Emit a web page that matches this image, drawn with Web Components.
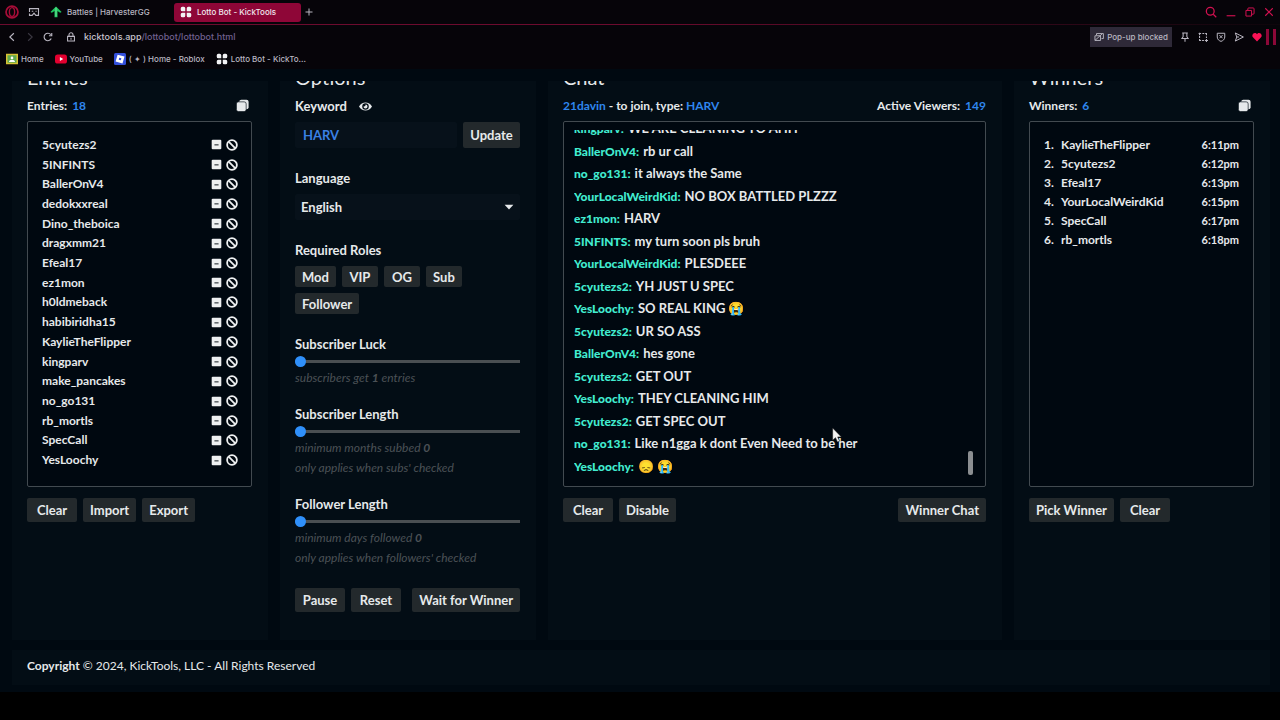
<!DOCTYPE html>
<html lang="en">
<head>
<meta charset="utf-8">
<title>Lotto Bot - KickTools</title>
<style>
  html, body { margin: 0; height: 100%; background: #000; }
  body {
    --text: #e6e9eb;
    --blue: #2f86ee;
    --mint: #42ecd0;
    --panel: #030d15;
    --well: #000810;
    --line: #424a50;
    --button: #23292c;
    font-family: Lato, "Liberation Sans", sans-serif;
    font-size: 13px;
    font-weight: 700;
    line-height: 20px;
    color: var(--text);
    overflow: hidden;
  }
</style>
</head>
<body>
<lotto-app></lotto-app>

<script>
const template = (html) => {
  const el = document.createElement("template");
  el.innerHTML = html;
  return el;
};

class BaseElement extends HTMLElement {
  constructor() {
    super();
    this.attachShadow({ mode: "open" });
    this.shadowRoot.appendChild(this.constructor.template.content.cloneNode(true));
  }
}

/* ---------- icons ---------- */

const icons = {
  opera: `<circle cx="8" cy="8" r="6.800" fill="none" stroke="#a80d38" stroke-width="2"/><ellipse cx="8" cy="8" rx="3" ry="5" fill="none" stroke="#a80d38" stroke-width="1.600"/>`,
  workspace: `<path d="M2 8V3.500h12V12.500h-3.500L8 9.500l-2.500 3H2V10M5 7h2M10 7h1.500" fill="none" stroke="currentColor" stroke-width="1.500"/>`,
  harvester: `<path d="M8 0.500L15.500 8l-2 1L10 6.500V15H6V6.500L2.500 9l-2-1Z" fill="#1fc560"/><path d="M8 2v12" stroke="#8af0b0"/>`,
  clover: `<path d="M1 3a2 2 0 0 1 2-2h2a2 2 0 0 1 2 2v4H3a2 2 0 0 1-2-2ZM9 3a2 2 0 0 1 2-2h2a2 2 0 0 1 2 2v2a2 2 0 0 1-2 2H9ZM1 11a2 2 0 0 1 2-2h4v4a2 2 0 0 1-2 2H3a2 2 0 0 1-2-2ZM9 9h4a2 2 0 0 1 2 2v2a2 2 0 0 1-2 2h-2a2 2 0 0 1-2-2Z" fill="#f2f2f4"/>`,
  plus: `<path d="M8 1v14M1 8h14" stroke="currentColor" stroke-width="2"/>`,
  back: `<path d="M11 2L4.500 8L11 14" fill="none" stroke="currentColor" stroke-width="1.800"/>`,
  forward: `<path d="M5 2l6.500 6L5 14" fill="none" stroke="currentColor" stroke-width="1.800"/>`,
  reload: `<path d="M13.200 10.500A6 6 0 1 1 12.500 4.200M14 1.500V6H9.500" fill="none" stroke="currentColor" stroke-width="1.800"/>`,
  lock: `<path d="M2.500 7h11v7.500h-11ZM4.800 7V4.500a3.200 3.200 0 0 1 6.400 0V7M8 9v3.500" fill="none" stroke="currentColor" stroke-width="1.700"/>`,
  classroom: `<path d="M0 1h16v14H0Z" fill="#d8c234"/><path d="M2 3h12v10H2Z" fill="#5ea94e"/><circle cx="8" cy="6.500" r="1.800" fill="#fff"/><path d="M4 12c0-4 8-4 8 0Z" fill="#fff"/>`,
  youtube: `<rect y="2" width="16" height="12" rx="3.500" fill="#e3002f"/><path d="M6.500 5.300L11 8l-4.500 2.700Z" fill="#fff"/>`,
  roblox: `<rect width="16" height="16" rx="2" fill="#3350dc"/><path fill="#fff" fill-rule="evenodd" d="M4.800 2.200L14 4.800L11.300 13.900L2.100 11.400ZM7 6.300L6.300 9L9.100 9.700L9.800 7Z"/>`,
  search: `<circle cx="7" cy="7" r="5.200" fill="none" stroke="currentColor" stroke-width="1.700"/><path d="M11 11l4 4" stroke="currentColor" stroke-width="1.700"/>`,
  minimize: `<path d="M1 14h14" stroke="currentColor" stroke-width="1.800"/>`,
  restore: `<path d="M1.500 5.500h9v9h-9ZM4.500 5V3a1.500 1.500 0 0 1 1.500-1.500h7A1.500 1.500 0 0 1 14.500 3v7a1.500 1.500 0 0 1-1.500 1.500h-2" fill="none" stroke="currentColor" stroke-width="1.600"/>`,
  close: `<path d="M2 2l12 12M14 2L2 14" stroke="currentColor" stroke-width="1.700"/>`,
  popup: `<path d="M4 5V2.500h11v8h-3M1.500 6h9v7.500h-9ZM1.500 13.500L13 3" fill="none" stroke="currentColor" stroke-width="1.500"/>`,
  pin: `<path d="M3.500 1.500h9M5 1.500v6L3 10.500h10L11 7.500v-6M8 10.500v5" fill="none" stroke="currentColor" stroke-width="1.700"/>`,
  snapshot: `<path d="M2.500 1v4M1 2.500h4M7 2.500h3M11.500 2.500h2V5M13.500 7v2.500M13.500 11v5M11 13.500h5M9.500 13.500H6.500M5 13.500H2.500V11M2.500 9.500V6.500" fill="none" stroke="currentColor" stroke-width="1.700"/>`,
  shield: `<path d="M2 2h12v6c0 4-3 6-6 7c-3-1-6-3-6-7ZM5.500 5l5 5M10.500 5l-5 5" fill="none" stroke="currentColor" stroke-width="1.600"/>`,
  send: `<path d="M2 1.500L15 8L2 14.500L4.500 8ZM4.500 8H8" fill="none" stroke="currentColor" stroke-width="1.600"/>`,
  heart: `<path d="M8 15L1.500 8.500C-1 5.500 1.500 1.500 4.800 1.500C6.500 1.500 7.500 2.500 8 3.500C8.500 2.500 9.500 1.500 11.200 1.500C14.500 1.500 17 5.500 14.500 8.500Z" fill="#fa1256"/>`,
  copy: `<rect x="4" y="1" width="11.500" height="11.500" rx="2.500" fill="currentColor"/><rect x="0.500" y="3.500" width="12" height="12" rx="2.500" fill="currentColor" stroke="#030d15" stroke-width="0.800"/>`,
  eye: `<path d="M0 8C3.500 1.500 12.500 1.500 16 8C12.500 14.500 3.500 14.500 0 8Z" fill="currentColor"/><circle cx="8" cy="8" r="4" fill="#030d15"/><path d="M8 5.500A2.500 2.500 0 1 1 5.500 8A2 2 0 0 0 8 5.500Z" fill="currentColor"/>`,
  minus: `<rect x="1" y="1" width="14" height="14" rx="1.500" fill="currentColor"/><path d="M5 8.500h6" stroke="#3c4348" stroke-width="1.800"/>`,
  ban: `<circle cx="8" cy="8" r="6.500" fill="none" stroke="currentColor" stroke-width="2.400"/><path d="M3.500 3.500l9 9" stroke="currentColor" stroke-width="2.400"/>`,
  caret: `<path d="M1 4.500h14L8 12Z" fill="currentColor"/>`,
  pointer: `<path d="M3 0v14l3.300-3L8.500 16l2.500-1L8.800 10.200H13Z" fill="#f4f4f4" stroke="#111" stroke-width="0.600"/>`
};

class LottoIcon extends HTMLElement {
  connectedCallback() {
    const root = this.shadowRoot || this.attachShadow({ mode: "open" });
    root.innerHTML = /* html */ `
      <style>
        :host { display: block; flex: none; width: 12px; height: 12px; }
        svg { display: block; width: 100%; height: 100%; }
      </style>
      <svg viewBox="0 0 16 16" aria-hidden="true">${icons[this.getAttribute("name")]}</svg>`;
  }
}
customElements.define("lotto-icon", LottoIcon);

/* ---------- browser bars ---------- */

class BrowserBar extends BaseElement {
  static template = template(/* html */ `
    <style>
      :host {
        display: block;
        flex: none;
        background: #060409;
        color: #b9b6c1;
        font: 500 8px/12px Inter, "Liberation Sans", sans-serif;
      }
      .row { display: flex; align-items: center; }
      .tabs {
        height: 24px;
        padding: 0 6px 0 5px;
        border-bottom: 1px solid;
        border-image: linear-gradient(90deg, #6c0b2e 50%, #0d050b) 1;
      }
      .address { height: 24px; padding: 0 4px 0 7px; }
      .bookmarks { height: 20px; padding: 0 6px; gap: 11px; }
      button {
        display: flex;
        align-items: center;
        gap: 5px;
        padding: 0;
        border: 0;
        background: none;
        color: inherit;
        font: inherit;
      }
      a { display: flex; align-items: center; gap: 3px; color: inherit; text-decoration: none; white-space: nowrap; }
      .space { flex: 1; }
      .small { width: 10px; height: 10px; }
      .opera { width: 14px; height: 14px; }
      .start { gap: 9px; }
      .tab { width: 118px; margin-left: 10px; white-space: nowrap; }
      .active {
        width: 127px;
        height: 19px;
        margin-left: 6px;
        padding-left: 6px;
        border-radius: 3px;
        background: #8e0637;
        color: #f0e8ee;
      }
      .add { width: 16px; height: 16px; justify-content: center; }
      .add lotto-icon { width: 8px; height: 8px; }
      .window { gap: 9px; color: #d21150; }
      .window button, .tools button { flex: none; }
      .url { margin-left: 8px; font-size: 9px; color: #c8c5cf; }
      .url span { color: #71608f; }
      .nav { gap: 8px; }
      .nav .lock { margin-left: 5px; }
      .dim { color: #3b3842; }
      .popup {
        height: 20px;
        gap: 3px;
        padding: 0 4px;
        background: #2e2938;
        white-space: nowrap;
      }
      .tools { gap: 8px; }
      .stripes { width: 4px; height: 16px; margin-left: 4px; border: solid #8c0838; border-width: 0 3px; }
    </style>
    <div class="row tabs">
      <div class="row start">
        <button aria-label="Menu"><lotto-icon class="opera" name="opera"></lotto-icon></button>
        <button aria-label="Workspaces"><lotto-icon name="workspace"></lotto-icon></button>
      </div>
      <button class="tab"><lotto-icon name="harvester"></lotto-icon>Battles | HarvesterGG</button>
      <button class="tab active"><lotto-icon name="clover"></lotto-icon>Lotto Bot - KickTools</button>
      <button class="add" aria-label="New tab"><lotto-icon name="plus"></lotto-icon></button>
      <span class="space"></span>
      <div class="row window">
        <button aria-label="Search tabs"><lotto-icon name="search"></lotto-icon></button>
        <button aria-label="Minimize"><lotto-icon class="small" name="minimize"></lotto-icon></button>
        <button aria-label="Restore"><lotto-icon class="small" name="restore"></lotto-icon></button>
        <button aria-label="Close"><lotto-icon class="small" name="close"></lotto-icon></button>
      </div>
    </div>
    <div class="row address">
      <div class="row nav">
        <button aria-label="Back"><lotto-icon class="small" name="back"></lotto-icon></button>
        <button aria-label="Forward" class="dim"><lotto-icon class="small" name="forward"></lotto-icon></button>
        <button aria-label="Reload"><lotto-icon class="small" name="reload"></lotto-icon></button>
        <lotto-icon class="small lock" name="lock"></lotto-icon>
      </div>
      <div class="url">kicktools.app<span>/lottobot/lottobot.html</span></div>
      <span class="space"></span>
      <div class="row tools">
        <button class="popup"><lotto-icon class="small" name="popup"></lotto-icon>Pop-up blocked</button>
        <button aria-label="Pin"><lotto-icon class="small" name="pin"></lotto-icon></button>
        <button aria-label="Snapshot"><lotto-icon class="small" name="snapshot"></lotto-icon></button>
        <button aria-label="Ad blocker"><lotto-icon class="small" name="shield"></lotto-icon></button>
        <button aria-label="My Flow"><lotto-icon class="small" name="send"></lotto-icon></button>
        <button aria-label="Bookmark"><lotto-icon class="small" name="heart"></lotto-icon></button>
      </div>
      <span class="stripes"></span>
    </div>
    <nav class="row bookmarks">
      <a href="#home"><lotto-icon name="classroom"></lotto-icon>Home</a>
      <a href="#youtube"><lotto-icon name="youtube"></lotto-icon>YouTube</a>
      <a href="#roblox"><lotto-icon name="roblox"></lotto-icon>( ✦ ) Home - Roblox</a>
      <a href="#lottobot"><lotto-icon name="clover"></lotto-icon>Lotto Bot - KickTo...</a>
    </nav>`);
}
customElements.define("browser-bar", BrowserBar);

/* ---------- controls ---------- */

class LottoButton extends BaseElement {
  static template = template(/* html */ `
    <style>
      :host { display: block; flex: none; height: 24px; }
      button {
        height: 100%;
        min-width: var(--button-width, 50px);
        padding: 0 7px;
        border: 0;
        border-radius: 2px;
        background: var(--button);
        color: inherit;
        font: inherit;
        white-space: nowrap;
        cursor: pointer;
      }
      button:hover { background: #30373b; }
    </style>
    <button><slot></slot></button>`);
}
customElements.define("lotto-button", LottoButton);

class LottoPanel extends BaseElement {
  static template = template(/* html */ `
    <style>
      :host {
        display: flex;
        flex-direction: column;
        min-width: 0;
        padding: 0 16px 28px 15px;
        background: var(--panel);
      }
      h2 { margin: 0 0 8px; font-size: 20px; font-weight: 400; line-height: 22px; }
      .info { display: flex; justify-content: space-between; height: 20px; margin-bottom: 5px; font-size: 12px; }
      .info:not(.used) { display: none; }
      .actions { display: flex; gap: 6px; margin-top: 11px; }
      .actions:not(.used) { display: none; }
    </style>
    <h2></h2>
    <div class="info"><slot name="info"></slot></div>
    <slot></slot>
    <div class="actions"><slot name="actions"></slot></div>`);

  connectedCallback() {
    this.shadowRoot.querySelector("h2").textContent = this.getAttribute("heading");
    for (const name of ["info", "actions"]) {
      const used = this.querySelector(`:scope > [slot="${name}"]`) !== null;
      this.shadowRoot.querySelector("." + name).classList.toggle("used", used);
    }
  }
}
customElements.define("lotto-panel", LottoPanel);

class LottoSlider extends BaseElement {
  static template = template(/* html */ `
    <style>
      :host { display: block; }
      label { display: block; }
      input {
        display: block;
        width: 100%;
        height: 14px;
        margin: 0;
        appearance: none;
        background: linear-gradient(#4a4f52, #4a4f52) center / 100% 3px no-repeat;
      }
      input::-webkit-slider-thumb {
        appearance: none;
        width: 11px;
        height: 11px;
        border-radius: 50%;
        background: #2f90fb;
      }
      .hint { color: #4b5155; font-size: 12px; font-style: italic; font-weight: 400; }
    </style>
    <label for="range"></label>
    <input id="range" type="range" min="0" max="12" value="0">
    <div class="hint"><slot></slot></div>`);

  connectedCallback() {
    this.shadowRoot.querySelector("label").textContent = this.getAttribute("label");
  }
}
customElements.define("lotto-slider", LottoSlider);

/* ---------- lists ---------- */

const entries = [
  "5cyutezs2", "5INFINTS", "BallerOnV4", "dedokxxreal", "Dino_theboica", "dragxmm21",
  "Efeal17", "ez1mon", "h0ldmeback", "habibiridha15", "KaylieTheFlipper", "kingparv",
  "make_pancakes", "no_go131", "rb_mortls", "SpecCall", "YesLoochy"
];

const messages = [
  ["kingparv", "WE ARE CLEANING YO AHH"],
  ["BallerOnV4", "rb ur call"],
  ["no_go131", "it always the Same"],
  ["YourLocalWeirdKid", "NO BOX BATTLED PLZZZ"],
  ["ez1mon", "HARV"],
  ["5INFINTS", "my turn soon pls bruh"],
  ["YourLocalWeirdKid", "PLESDEEE"],
  ["5cyutezs2", "YH JUST U SPEC"],
  ["YesLoochy", "SO REAL KING 😭"],
  ["5cyutezs2", "UR SO ASS"],
  ["BallerOnV4", "hes gone"],
  ["5cyutezs2", "GET OUT"],
  ["YesLoochy", "THEY CLEANING HIM"],
  ["5cyutezs2", "GET SPEC OUT"],
  ["no_go131", "Like n1gga k dont Even Need to be her"],
  ["YesLoochy", "😞 😭"]
];

const winners = [
  ["KaylieTheFlipper", "6:11pm"], ["5cyutezs2", "6:12pm"], ["Efeal17", "6:13pm"],
  ["YourLocalWeirdKid", "6:15pm"], ["SpecCall", "6:17pm"], ["rb_mortls", "6:18pm"]
];

const boxStyle = `
  :host {
    display: block;
    box-sizing: border-box;
    height: 366px;
    border: 1px solid var(--line);
    border-radius: 2px;
    background: var(--well);
    font-size: 12px;
  }
  ul, ol { margin: 0; padding: 0; list-style: none; }`;

class EntryList extends BaseElement {
  static template = template(/* html */ `
    <style>
      ${boxStyle}
      ul { display: grid; grid-auto-rows: 1fr; height: 335px; padding: 13px 13px 0 14px; }
      li { display: flex; align-items: center; gap: 4px; line-height: 18px; }
      span { flex: 1; }
      button { padding: 0; border: 0; background: none; color: #eef0f1; }
      .minus { width: 11px; height: 11px; }
    </style>
    <ul></ul>`);

  connectedCallback() {
    this.shadowRoot.querySelector("ul").innerHTML = entries.map((name) => `
      <li>
        <span>${name}</span>
        <button aria-label="Remove ${name}"><lotto-icon class="minus" name="minus"></lotto-icon></button>
        <button aria-label="Ban ${name}"><lotto-icon name="ban"></lotto-icon></button>
      </li>`).join("");
  }
}
customElements.define("entry-list", EntryList);

class ChatLog extends BaseElement {
  static template = template(/* html */ `
    <style>
      ${boxStyle}
      :host { display: flex; padding: 8px 10px; position: relative; }
      .view { flex: 1; display: flex; flex-direction: column; justify-content: flex-end; overflow: hidden; }
      ul { flex: none; display: grid; grid-auto-rows: 1fr; height: 360px; }
      li { display: flex; align-items: baseline; gap: 4px; white-space: nowrap; }
      b { color: var(--mint); }
      span { font-size: 13px; }
      .thumb { align-self: flex-end; width: 5px; height: 24px; margin: 0 2px 3px 0; border-radius: 2px; background: #8b8e91; }
      /* mouse pointer over the log */
      .pointer { position: absolute; left: 266px; top: 306px; width: 14px; height: 14px; }
    </style>
    <div class="view"><ul></ul></div>
    <div class="thumb"></div>
    <lotto-icon class="pointer" name="pointer"></lotto-icon>`);

  connectedCallback() {
    this.shadowRoot.querySelector("ul").innerHTML = messages
      .map(([name, text]) => `<li><b>${name}:</b><span>${text}</span></li>`)
      .join("");
  }
}
customElements.define("chat-log", ChatLog);

class WinnerList extends BaseElement {
  static template = template(/* html */ `
    <style>
      ${boxStyle}
      ol { padding: 13px 14px; }
      li { display: flex; line-height: 19px; }
      .rank { width: 17px; }
      .name { flex: 1; }
      time { font-size: 11px; }
    </style>
    <ol></ol>`);

  connectedCallback() {
    this.shadowRoot.querySelector("ol").innerHTML = winners.map(([name, time], i) => `
      <li><span class="rank">${i + 1}.</span><span class="name">${name}</span><time>${time}</time></li>`).join("");
  }
}
customElements.define("winner-list", WinnerList);

/* ---------- options ---------- */

class LottoOptions extends BaseElement {
  static template = template(/* html */ `
    <style>
      :host { display: flex; flex-direction: column; gap: 20px; }
      .title { display: flex; align-items: center; gap: 12px; margin-bottom: 6px; }
      .title lotto-icon { width: 13px; height: 13px; }
      .row { display: flex; gap: 6px; }
      .roles { flex-wrap: wrap; --button-width: 36px; }
      .roles lotto-button { height: 21px; }
      .row lotto-button.update { height: 26px; --button-width: 57px; }
      input, select {
        box-sizing: border-box;
        width: 100%;
        height: 26px;
        border: 0;
        border-radius: 2px;
        background: #07111a;
        color: inherit;
        font: inherit;
      }
      input { flex: 1; min-width: 0; padding: 0 8px; color: #3a80e4; }
      select { appearance: none; padding: 0 6px; }
      .select { display: grid; align-items: center; }
      .select > * { grid-area: 1 / 1; }
      .select lotto-icon { justify-self: end; width: 10px; height: 10px; margin-right: 6px; pointer-events: none; }
      .sliders { display: flex; flex-direction: column; gap: 16px; }
      .push { margin-left: auto; }
    </style>
    <div>
      <div class="title"><label for="keyword">Keyword</label><lotto-icon name="eye"></lotto-icon></div>
      <div class="row">
        <input id="keyword" type="text" value="HARV">
        <lotto-button class="update">Update</lotto-button>
      </div>
    </div>
    <div>
      <div class="title"><label for="language">Language</label></div>
      <div class="select">
        <select id="language"><option>English</option></select>
        <lotto-icon name="caret"></lotto-icon>
      </div>
    </div>
    <div>
      <div class="title">Required Roles</div>
      <div class="row roles">
        <lotto-button>Mod</lotto-button>
        <lotto-button>VIP</lotto-button>
        <lotto-button>OG</lotto-button>
        <lotto-button>Sub</lotto-button>
        <lotto-button>Follower</lotto-button>
      </div>
    </div>
    <div class="sliders">
      <lotto-slider label="Subscriber Luck">subscribers get <b>1</b> entries</lotto-slider>
      <lotto-slider label="Subscriber Length">minimum months subbed <b>0</b><br>only applies when subs' checked</lotto-slider>
      <lotto-slider label="Follower Length">minimum days followed <b>0</b><br>only applies when followers' checked</lotto-slider>
    </div>
    <div class="row">
      <lotto-button>Pause</lotto-button>
      <lotto-button>Reset</lotto-button>
      <lotto-button class="push">Wait for Winner</lotto-button>
    </div>`);
}
customElements.define("lotto-options", LottoOptions);

/* ---------- page ---------- */

class LottoApp extends BaseElement {
  static template = template(/* html */ `
    <style>
      :host {
        display: flex;
        flex-direction: column;
        box-sizing: border-box;
        height: 100vh;
        padding-bottom: 28px;
      }
      main {
        flex: 1;
        min-height: 0;
        display: flex;
        flex-direction: column;
        padding: 12px 10px 7px 12px;
        background: #000911;
      }
      /* the page is scrolled to its end, so the headings are cut at the top */
      .view {
        flex: 1;
        min-height: 0;
        display: flex;
        flex-direction: column;
        justify-content: flex-end;
        overflow: hidden;
      }
      .columns {
        flex: none;
        display: grid;
        grid-template-columns: 128fr 128fr 227fr 128fr;
        gap: 12px;
      }
      em { color: var(--blue); font-style: normal; }
      .info em { margin-left: 2px; }
      .copy { width: 13px; height: 13px; margin: 3px 3px 0 0; }
      .push { margin-left: auto; }
      footer {
        flex: none;
        margin-top: 10px;
        padding: 6px 15px 9px;
        background: var(--panel);
        font-size: 12px;
        font-weight: 400;
      }
    </style>
    <browser-bar></browser-bar>
    <main>
      <div class="view">
        <div class="columns">
          <lotto-panel heading="Entries">
            <span class="info" slot="info">Entries: <em>18</em></span>
            <lotto-icon class="copy" slot="info" name="copy"></lotto-icon>
            <entry-list></entry-list>
            <lotto-button slot="actions">Clear</lotto-button>
            <lotto-button slot="actions">Import</lotto-button>
            <lotto-button slot="actions">Export</lotto-button>
          </lotto-panel>
          <lotto-panel heading="Options">
            <lotto-options></lotto-options>
          </lotto-panel>
          <lotto-panel heading="Chat">
            <span slot="info"><em>21davin</em> - to join, type: <em>HARV</em></span>
            <span class="info" slot="info">Active Viewers: <em>149</em></span>
            <chat-log></chat-log>
            <lotto-button slot="actions">Clear</lotto-button>
            <lotto-button slot="actions">Disable</lotto-button>
            <lotto-button class="push" slot="actions">Winner Chat</lotto-button>
          </lotto-panel>
          <lotto-panel heading="Winners">
            <span class="info" slot="info">Winners: <em>6</em></span>
            <lotto-icon class="copy" slot="info" name="copy"></lotto-icon>
            <winner-list></winner-list>
            <lotto-button slot="actions">Pick Winner</lotto-button>
            <lotto-button slot="actions">Clear</lotto-button>
          </lotto-panel>
        </div>
        <footer><b>Copyright</b> © 2024, KickTools, LLC - All Rights Reserved</footer>
      </div>
    </main>`);
}
customElements.define("lotto-app", LottoApp);
</script>
</body>
</html>
